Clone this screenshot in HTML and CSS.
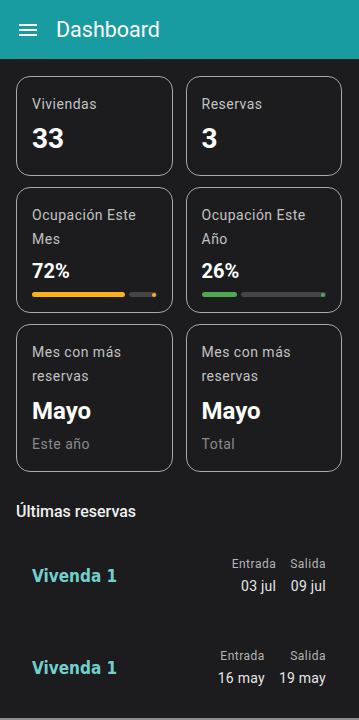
FILE: index.html
```html
<!DOCTYPE html>
<html lang="es">

<head>
    <meta charset="UTF-8">
    <meta name="viewport" content="width=device-width, initial-scale=1.0">
    <title>Dashboard</title>
    <link rel="stylesheet" href="styles.css">
</head>

<body>
    <header class="appbar">
        <svg class="menu-icon" width="24" height="24" viewBox="0 0 24 24">
            <path d="M3 18h18v-2H3v2zm0-5h18v-2H3v2zm0-7v2h18V6H3z" fill="#fff" />
        </svg>
        <h1 class="title">Dashboard</h1>
    </header>

    <main>
        <section class="stats">
            <div class="card">
                <div class="label">Viviendas</div>
                <div class="value big">33</div>
            </div>
            <div class="card">
                <div class="label">Reservas</div>
                <div class="value big">3</div>
            </div>

            <div class="card">
                <div class="label">Ocupación Este Mes</div>
                <div class="value pct">72%</div>
                <div class="progress yellow">
                    <span class="active" style="width: 93px"></span>
                    <span class="track"><i class="stop"></i></span>
                </div>
            </div>
            <div class="card">
                <div class="label">Ocupación Este Año</div>
                <div class="value pct">26%</div>
                <div class="progress green">
                    <span class="active" style="width: 35px"></span>
                    <span class="track"><i class="stop"></i></span>
                </div>
            </div>

            <div class="card">
                <div class="label">Mes con más reservas</div>
                <div class="value month">Mayo</div>
                <div class="sub">Este año</div>
            </div>
            <div class="card">
                <div class="label">Mes con más reservas</div>
                <div class="value month">Mayo</div>
                <div class="sub">Total</div>
            </div>
        </section>

        <h2 class="section-title">Últimas reservas</h2>

        <ul class="bookings">
            <li class="booking">
                <span class="house">Vivenda 1</span>
                <div class="dates">
                    <div class="date-col">
                        <span class="date-label">Entrada</span>
                        <span class="date-value">03 jul</span>
                    </div>
                    <div class="date-col">
                        <span class="date-label">Salida</span>
                        <span class="date-value">09 jul</span>
                    </div>
                </div>
            </li>
            <li class="booking">
                <span class="house">Vivenda 1</span>
                <div class="dates">
                    <div class="date-col">
                        <span class="date-label">Entrada</span>
                        <span class="date-value">16 may</span>
                    </div>
                    <div class="date-col">
                        <span class="date-label">Salida</span>
                        <span class="date-value">19 may</span>
                    </div>
                </div>
            </li>
        </ul>
        <div class="bottom-edge"></div>
    </main>
</body>

</html>
```

FILE: styles.css
```css
html,
body {
    margin: 0;
    padding: 0;
    box-sizing: border-box;
}

*,
*::before,
*::after {
    box-sizing: inherit;
}

body {
    width: 359px;
    height: 720px;
    overflow: hidden;
    background: #1c1c1e;
    font-family: Roboto, "Noto Sans", sans-serif;
    color: #fff;
}

/* top bar */
.appbar {
    height: 59px;
    background: #189ba1;
    display: flex;
    align-items: center;
    padding: 0 16px;
    gap: 16px;
}

.menu-icon {
    display: block;
    flex: none;
}

.title {
    margin: 0;
    font-size: 21.5px;
    font-weight: 400;
    color: #fff;
}

main {
    padding: 17px 17px 0 16px;
}

/* cards */
.stats {
    display: grid;
    grid-template-columns: 1fr 1fr;
    column-gap: 13px;
    row-gap: 11px;
}

.card {
    border: 1.5px solid #a9a9a9;
    border-radius: 14px;
    padding: 15px 15px 14.5px 15px;
}

.label {
    font-size: 14px;
    letter-spacing: 0.5px;
    line-height: 24px;
    color: #c2c2c2;
}

.value {
    font-weight: 700;
    color: #fff;
}

.big {
    font-size: 28px;
    line-height: 36px;
    margin: 4.5px 0 4px;
}

.pct {
    font-size: 20px;
    line-height: 28px;
    margin-top: 6px;
}

.month {
    font-size: 24px;
    line-height: 32px;
    margin-top: 7px;
}

.sub {
    font-size: 14px;
    letter-spacing: 0.5px;
    line-height: 20px;
    margin: 7px 0 3px;
    color: #8a8a8a;
}

/* progress bar */
.progress {
    display: flex;
    gap: 4px;
    height: 5px;
    margin-top: 7px;
}

.progress .active {
    border-radius: 3px;
    flex: none;
}

.progress .track {
    flex: 1;
    border-radius: 3px;
    background: #454545;
    display: flex;
    justify-content: flex-end;
    align-items: center;
    padding-right: 1px;
}

.progress .stop {
    width: 4px;
    height: 4px;
    border-radius: 50%;
}

.yellow .active,
.yellow .stop {
    background: #fbb117;
}

.green .active,
.green .stop {
    background: #4fa953;
}

/* bookings list */
.section-title {
    margin: 28px 0 0;
    font-size: 16px;
    font-weight: 500;
    line-height: 24px;
    color: #f0f0f0;
}

.bookings {
    list-style: none;
    margin: 6px 0 0;
    padding: 0;
}

.booking {
    height: 92px;
    display: flex;
    align-items: center;
    justify-content: space-between;
    padding: 0 16px;
}

.house {
    font-family: "DejaVu Sans Condensed", "DejaVu Sans", sans-serif;
    font-weight: 700;
    font-size: 17px;
    color: #72cfcd;
}

.dates {
    display: flex;
    gap: 14px;
}

.date-col {
    display: flex;
    flex-direction: column;
    align-items: flex-end;
}

.date-label {
    font-size: 12px;
    letter-spacing: 0.5px;
    line-height: 20px;
    color: #b4b4b4;
}

.date-value {
    font-size: 14px;
    letter-spacing: 0.25px;
    line-height: 24px;
    color: #e6e6e6;
}

.bottom-edge {
    margin: 4px -17px 0 -16px;
    border-top: 2px solid #8c8c8c;
}
```
